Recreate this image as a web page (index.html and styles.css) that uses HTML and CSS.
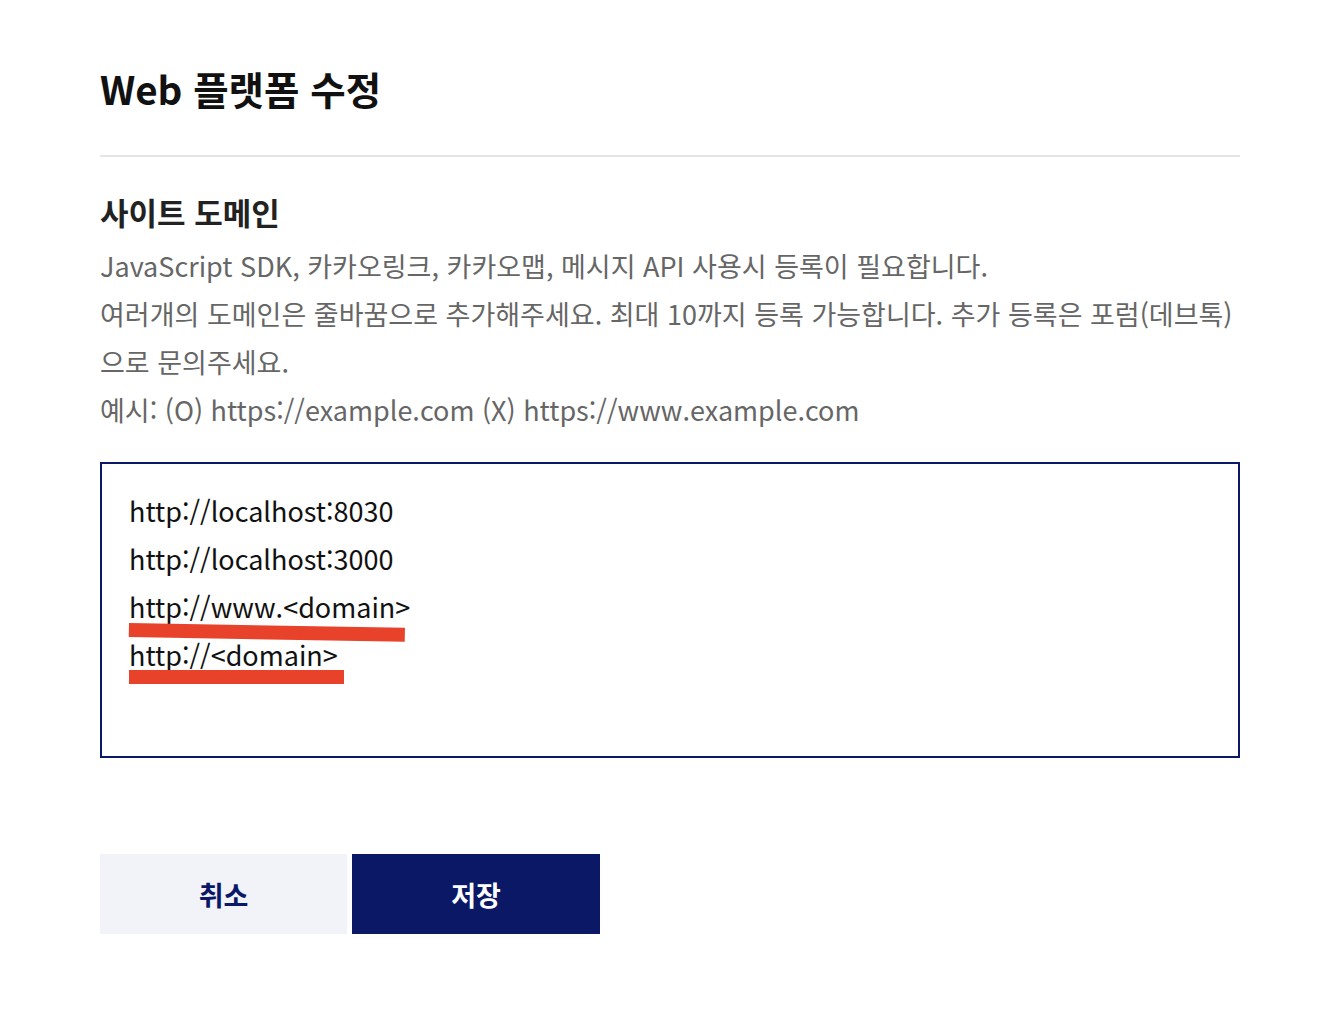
FILE: index.html
```html
<!DOCTYPE html>
<html lang="ko">
<head>
<meta charset="utf-8">
<title>Web 플랫폼 수정</title>
<link rel="stylesheet" href="styles.css">
</head>
<body>
<div class="page">
  <h1 class="title">Web 플랫폼 수정</h1>
  <hr class="divider">
  <h2 class="section">사이트 도메인</h2>
  <div class="desc">
    <p>JavaScript SDK, 카카오링크, 카카오맵, 메시지 API 사용시 등록이 필요합니다.</p>
    <p>여러개의 도메인은 줄바꿈으로 추가해주세요. 최대 10까지 등록 가능합니다. 추가 등록은 포럼(데브톡)으로 문의주세요.</p>
    <p>예시: (O) https://example.com (X) https://www.example.com</p>
  </div>
  <div class="textarea">
    <div class="line">http://localhost:8030</div>
    <div class="line">http://localhost:3000</div>
    <div class="line"><span class="mark mark-a">http://www.&lt;domain&gt;</span></div>
    <div class="line"><span class="mark mark-b">http://&lt;domain&gt;</span></div>
  </div>
  <div class="actions">
    <button class="btn btn-cancel">취소</button>
    <button class="btn btn-save">저장</button>
  </div>
</div>
</body>
</html>
```

FILE: styles.css
```css
* { box-sizing: border-box; }
html, body { margin: 0; padding: 0; background: #fff; }
body {
  font-family: "Noto Sans CJK KR", "Noto Sans", sans-serif;
  color: #111;
}
.page {
  width: 1140px;
  margin-left: 100px;
  padding-top: 60px;
}
.title {
  margin: 0;
  font-size: 38.5px;
  font-weight: 700;
  line-height: 56px;
  color: #111;
}
.divider {
  margin: 39px 0 0;
  border: 0;
  height: 2px;
  background: #e6e6e6;
}
.section {
  margin: 32px 0 0;
  font-size: 31px;
  font-weight: 700;
  line-height: 46px;
  color: #222;
}
.desc {
  margin-top: 7px;
  font-size: 27px;
  line-height: 48px;
  color: #666;
}
.desc p { margin: 0; }
.textarea {
  margin-top: 28px;
  height: 296px;
  border: 2px solid #0a1866;
  padding: 23px 27px;
  font-size: 27px;
  line-height: 48px;
  color: #111;
}
.line { position: relative; }
.mark { position: relative; display: inline-block; }
.mark::after {
  content: "";
  position: absolute;
  left: 0;
  background: #e8422a;
  height: 14px;
}
.mark-a::after {
  top: 40px;
  width: 276px;
  transform: rotate(1deg);
  transform-origin: left top;
}
.mark-b::after {
  top: 39px;
  width: 215px;
}
.actions {
  display: flex;
  gap: 5px;
  margin-top: 96px;
}
.btn {
  width: 248px;
  height: 80px;
  border: 0;
  font-family: "Noto Sans CJK KR", sans-serif;
  font-size: 27px;
  font-weight: 700;
  cursor: pointer;
}
.btn-cancel { background: #f1f3f8; color: #0a1866; width: 247px; }
.btn-save { background: #0a1866; color: #fff; }
```
